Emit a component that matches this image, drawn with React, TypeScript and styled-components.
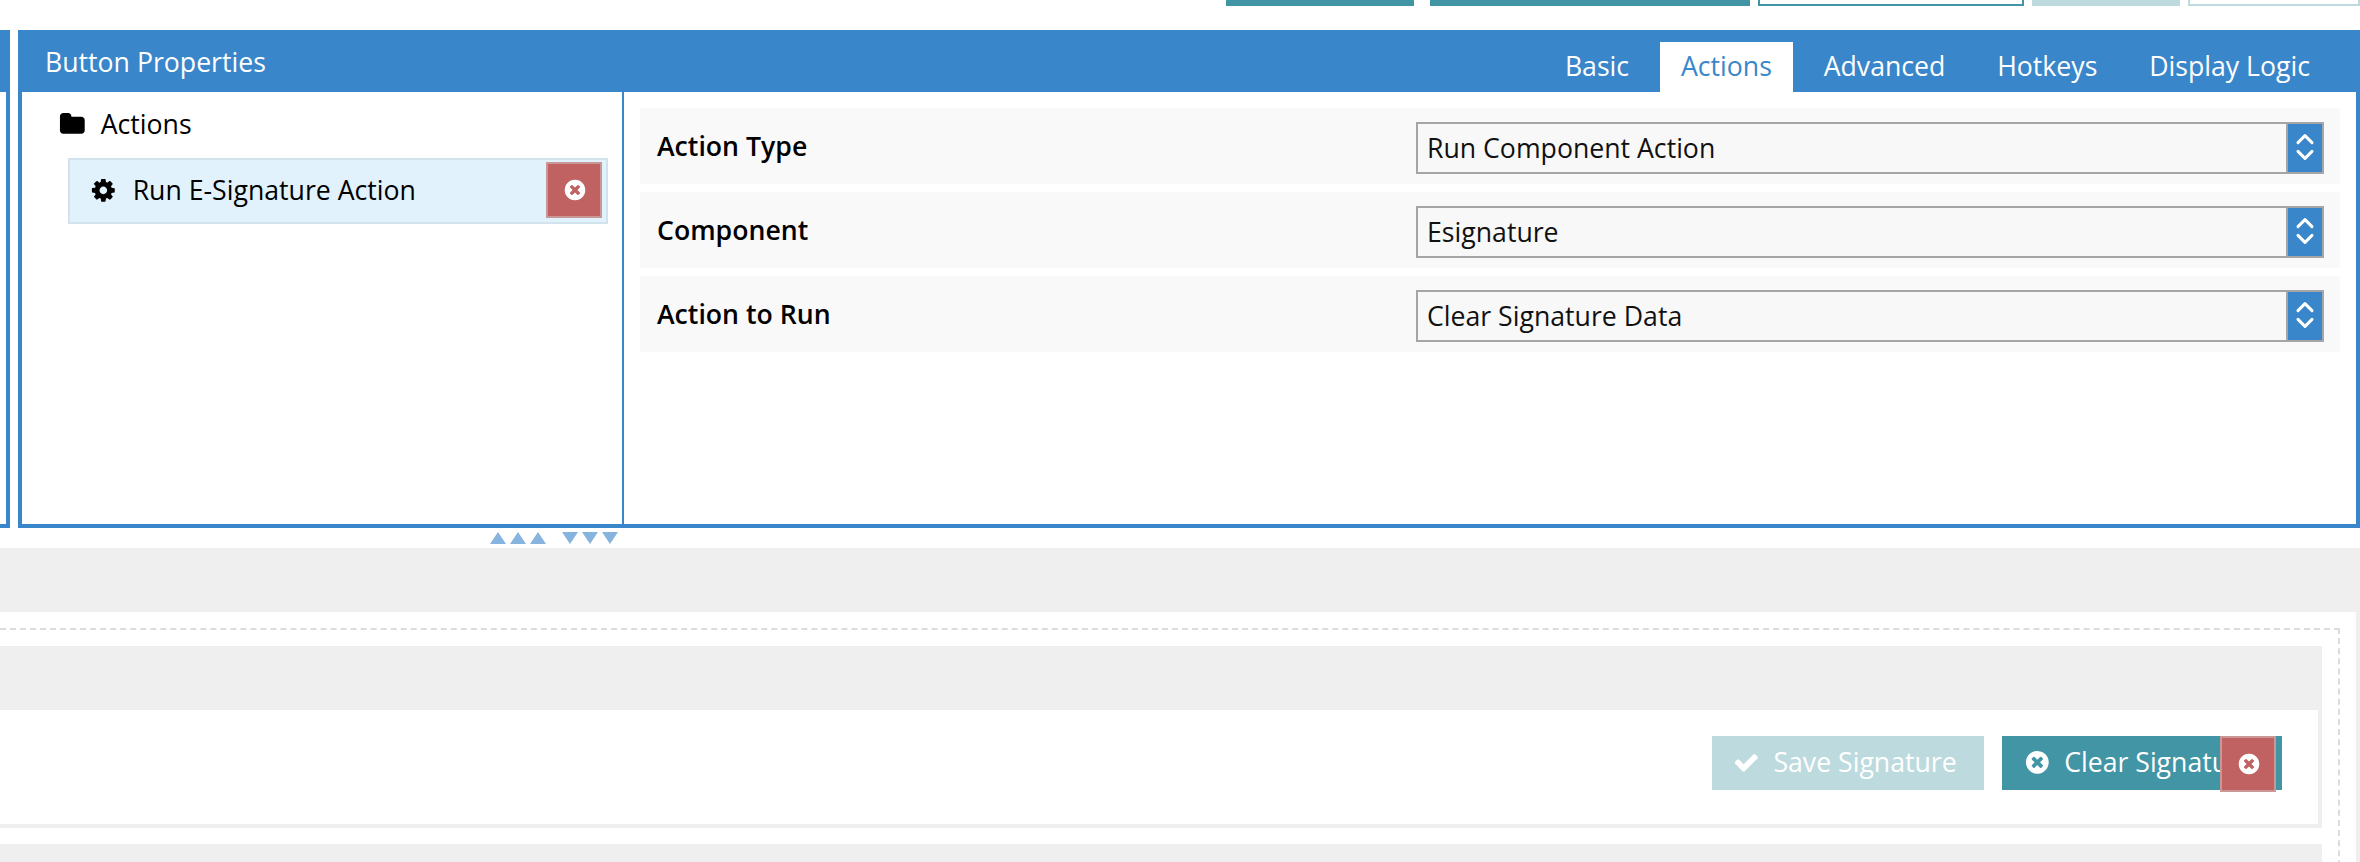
import React from "react";
import styled, { createGlobalStyle, css } from "styled-components";

const blue = "#3986ca";
const teal = "#4295a5";
const paleTeal = "#bddade";
const grey = "#efefef";

const GlobalStyle = createGlobalStyle`
  * { box-sizing: border-box; }
  body {
    margin: 0;
    background: #fff;
    color: #000;
    font-family: "Open Sans", "Noto Sans", sans-serif;
    font-size: 26.667px;
    line-height: 36px;
    overflow: hidden;
  }
`;

const Page = styled.div`
  width: 2360px;
  height: 862px;
  overflow: hidden;
  display: flex;
  flex-direction: column;
`;

const TopBar = styled.div`
  flex: none;
  height: 30px;
  display: flex;
  align-items: flex-start;
  padding-left: 1226px;
`;

const TopButton = styled.div<{ $w: number; $gap: number; $color: string; $outline?: boolean }>`
  width: ${(p) => p.$w}px;
  height: 6px;
  margin-right: ${(p) => p.$gap}px;
  flex: none;
  ${(p) =>
    p.$outline
      ? css`
          border: 2px solid ${p.$color};
          border-top: 0;
        `
      : css`
          background: ${p.$color};
        `}
`;

const Panels = styled.div`
  flex: none;
  display: flex;
  gap: 8px;
  height: 498px;
`;

const SidePanel = styled.div`
  width: 10px;
  border: solid ${blue};
  border-width: 62px 4px 4px 0;
`;

const Panel = styled.section`
  flex: 1;
  display: flex;
  flex-direction: column;
  border: solid ${blue};
  border-width: 0 4px 4px;
`;

const PanelHeader = styled.header`
  height: 62px;
  flex: none;
  display: flex;
  justify-content: space-between;
  align-items: center;
  background: ${blue};
  color: #fff;
  padding: 0 25.25px 0 23px;
`;

const Title = styled.span`
  padding-top: 2px;
`;

const Tabs = styled.nav`
  display: flex;
  align-self: flex-end;
  gap: 10.3px;
`;

const Tab = styled.span<{ $active?: boolean }>`
  height: 50px;
  padding: 0 20.75px 2px;
  display: flex;
  align-items: center;
  background: ${(p) => (p.$active ? "#fff" : "transparent")};
  color: ${(p) => (p.$active ? blue : "#fff")};
`;

const PanelBody = styled.div`
  flex: 1;
  display: flex;
`;

const Tree = styled.div`
  width: 602px;
  flex: none;
  border-right: 2px solid ${blue};
`;

const TreeRoot = styled.div`
  height: 62px;
  margin-bottom: 4px;
  padding: 2px 0 0 37px;
  display: flex;
  align-items: center;
  gap: 15px;
`;

const TreeItem = styled.div`
  height: 66px;
  margin: 0 14px 0 46px;
  border: 2px solid #d2e3ee;
  background: #e1f2fd;
  display: flex;
  align-items: flex-start;
  padding: 2px 4px 0 20px;
`;

const TreeItemLabel = styled.span`
  flex: 1;
  height: 56px;
  display: flex;
  align-items: center;
  gap: 16px;
`;

const DeleteBox = styled.span`
  width: 56px;
  height: 56px;
  flex: none;
  display: flex;
  align-items: center;
  justify-content: center;
  padding-left: 1px;
  padding-bottom: 1px;
  color: #fff;
  background: #c16262;
  border: 2px solid #c99796;
`;

const Form = styled.div`
  flex: 1;
  padding: 16px 16px 0;
  display: flex;
  flex-direction: column;
  gap: 8px;
`;

const FormRow = styled.div`
  height: 76px;
  padding: 14px 16px 10px 17px;
  display: flex;
  background: #f9f9f9;
`;

const FieldLabel = styled.label`
  width: 759px;
  height: 48px;
  display: flex;
  align-items: center;
  font-weight: 600;
`;

const SelectBox = styled.div`
  flex: 1;
  height: 52px;
  display: flex;
  border: 2px solid #a5a5a5;
  background: #f8f8f8;
  color: #111;
`;

const SelectValue = styled.span`
  flex: 1;
  display: flex;
  align-items: center;
  padding-left: 9px;
`;

const Stepper = styled.span`
  width: 36px;
  border-left: 2px solid #a5a5a5;
  background: ${blue};
`;

const ResizeBar = styled.div`
  flex: none;
  height: 20px;
  padding: 4px 0 0 490px;
  display: flex;
  gap: 16px;
`;

const TriangleGroup = styled.span`
  display: flex;
  gap: 4px;
`;

const Triangle = styled.span<{ $down?: boolean }>`
  width: 16px;
  height: 12px;
  background: #87b3df;
  clip-path: ${(p) =>
    p.$down ? "polygon(0 0, 100% 0, 50% 100%)" : "polygon(50% 0, 100% 100%, 0 100%)"};
`;

const Canvas = styled.main`
  flex: 1;
  border: solid ${grey};
  border-width: 64px 4px 0 0;
  padding: 16px 16px 0 0;
  overflow: hidden;
`;

const DropZone = styled.div`
  height: 400px;
  margin-left: -10px;
  border: 2px dashed #dcdcdc;
  padding: 16px 16px 0 0;
  display: flex;
  flex-direction: column;
  gap: 16px;
`;

const Section = styled.div`
  flex: none;
  height: 182px;
  border: solid ${grey};
  border-width: 64px 4px 4px 0;
  display: flex;
  justify-content: flex-end;
  gap: 18px;
  padding: 26px 36px 0 0;
`;

const ActionButton = styled.div<{ $w: number; $disabled?: boolean }>`
  position: relative;
  width: ${(p) => p.$w}px;
  height: 54px;
  padding: 0 0 2px ${(p) => (p.$disabled ? 20.75 : 21.5)}px;
  display: flex;
  align-items: center;
  gap: 14px;
  white-space: nowrap;
  color: #fff;
  background: ${(p) => (p.$disabled ? paleTeal : teal)};
`;

const DeleteBadge = styled.div`
  position: absolute;
  top: 0;
  right: 6px;
  display: flex;
`;

const paths = {
  check:
    "M1671 566q0 40-28 68l-724 724-136 136q-28 28-68 28t-68-28l-136-136-362-362q-28-28-28-68t28-68l136-136q28-28 68-28t68 28l294 295 656-657q28-28 68-28t68 28l136 136q28 28 28 68z",
  times:
    "M1277 1122q0-26-19-45l-181-181 181-181q19-19 19-45 0-27-19-46l-90-90q-19-18-46-18-26 0-45 18l-181 181-181-181q-19-18-45-18-27 0-46 18l-90 90q-19 19-19 46 0 26 19 45l181 181-181 181q-19 19-19 45 0 27 19 46l90 90q19 18 46 18 26 0 45-18l181-181 181 181q19 18 45 18 27 0 46-18l90-90q19-19 19-46zm387-226q0 209-103 385.5t-279.5 279.5-385.5 103-385.5-103-279.5-279.5-103-385.5 103-385.5 279.5-279.5 385.5-103 385.5 103 279.5 279.5 103 385.5z",
  cog: "M1152 896q0-106-75-181t-181-75-181 75-75 181 75 181 181 75 181-75 75-181zm512-109v222q0 12-8 23t-20 13l-185 28q-19 54-39 91 35 50 107 138 10 12 10 25t-9 23q-27 37-99 108t-94 71q-12 0-26-9l-138-108q-44 23-91 38-16 136-29 186-7 28-36 28h-222q-14 0-24.5-8.5t-11.5-21.5l-28-184q-49-16-90-37l-141 107q-10 9-25 9-14 0-25-11-126-114-165-168-7-10-7-23 0-12 8-23 15-21 51-66.5t54-70.5q-27-50-41-99l-183-27q-13-2-21-12.5t-8-23.5v-222q0-12 8-23t19-13l186-28q14-46 39-92-40-57-107-138-10-12-10-24 0-10 9-23 26-36 98.5-107.5t94.5-71.5q13 0 26 10l138 107q44-23 91-38 16-136 29-186 7-28 36-28h222q14 0 24.5 8.5t11.5 21.5l28 184q49 16 90 37l142-107q9-9 24-9 13 0 25 10 129 119 165 170 7 8 7 22 0 12-8 23-15 21-51 66.5t-54 70.5q26 50 41 98l183 28q13 2 21 12.5t8 23.5z",
  folder:
    "M1728 608v704q0 92-66 158t-158 66h-1216q-92 0-158-66t-66-158v-960q0-92 66-158t158-66h320q92 0 158 66t66 158v32h672q92 0 158 66t66 158z",
};

const GlyphSvg = styled.svg<{ $size: number; $drop: number }>`
  flex: none;
  width: ${(p) => p.$size}px;
  height: ${(p) => p.$size}px;
  margin-top: ${(p) => p.$drop}px;
  fill: currentColor;
`;

type GlyphProps = { name: keyof typeof paths; size?: number; drop?: number };

const Glyph = ({ name, size = 26.667, drop = 1 }: GlyphProps) => (
  <GlyphSvg $size={size} $drop={drop} viewBox="0 0 1792 1792">
    <path d={paths[name]} />
  </GlyphSvg>
);

const Chevrons = () => (
  <svg width="34" height="48" viewBox="0 0 34 48" fill="none" stroke="#fff" strokeWidth="3">
    <path
      d="M10 18.6 17 11.6l7 7M10 27.4 17 34.4l7-7"
      strokeLinecap="round"
      strokeLinejoin="round"
    />
  </svg>
);

const DeleteMark = () => (
  <DeleteBox>
    <Glyph name="times" size={24} drop={0} />
  </DeleteBox>
);

const fields = [
  { label: "Action Type", value: "Run Component Action" },
  { label: "Component", value: "Esignature" },
  { label: "Action to Run", value: "Clear Signature Data" },
];

const tabs = ["Basic", "Actions", "Advanced", "Hotkeys", "Display Logic"];

export default function App() {
  return (
    <Page>
      <GlobalStyle />
      <TopBar>
        <TopButton $w={188} $gap={16} $color={teal} />
        <TopButton $w={320} $gap={8} $color={teal} />
        <TopButton $w={266} $gap={8} $color={teal} $outline />
        <TopButton $w={148} $gap={8} $color={paleTeal} />
        <TopButton $w={172} $gap={0} $color={paleTeal} $outline />
      </TopBar>
      <Panels>
        <SidePanel />
        <Panel>
          <PanelHeader>
            <Title>Button Properties</Title>
            <Tabs>
              {tabs.map((t) => (
                <Tab key={t} $active={t === "Actions"}>
                  {t}
                </Tab>
              ))}
            </Tabs>
          </PanelHeader>
          <PanelBody>
            <Tree>
              <TreeRoot>
                <Glyph name="folder" />
                Actions
              </TreeRoot>
              <TreeItem>
                <TreeItemLabel>
                  <Glyph name="cog" />
                  Run E-Signature Action
                </TreeItemLabel>
                <DeleteMark />
              </TreeItem>
            </Tree>
            <Form>
              {fields.map((f) => (
                <FormRow key={f.label}>
                  <FieldLabel>{f.label}</FieldLabel>
                  <SelectBox>
                    <SelectValue>{f.value}</SelectValue>
                    <Stepper>
                      <Chevrons />
                    </Stepper>
                  </SelectBox>
                </FormRow>
              ))}
            </Form>
          </PanelBody>
        </Panel>
      </Panels>
      <ResizeBar>
        <TriangleGroup>
          <Triangle />
          <Triangle />
          <Triangle />
        </TriangleGroup>
        <TriangleGroup>
          <Triangle $down />
          <Triangle $down />
          <Triangle $down />
        </TriangleGroup>
      </ResizeBar>
      <Canvas>
        <DropZone>
          <Section>
            <ActionButton $w={272} $disabled>
              <Glyph name="check" />
              Save Signature
            </ActionButton>
            <ActionButton $w={280}>
              <Glyph name="times" />
              Clear Signature
              <DeleteBadge>
                <DeleteMark />
              </DeleteBadge>
            </ActionButton>
          </Section>
          <Section />
        </DropZone>
      </Canvas>
    </Page>
  );
}
